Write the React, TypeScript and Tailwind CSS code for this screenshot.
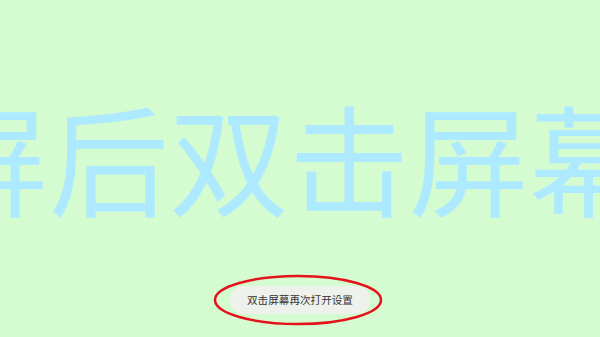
export default function App() {
  return (
    <div
      className="relative flex h-[337px] w-[600px] flex-col items-center overflow-hidden bg-[#d4fcd0]"
      style={{ fontFamily: '"Noto Sans CJK SC", "Noto Sans", sans-serif' }}
    >
      {/* scrolling big text */}
      <div className="mt-[96px] self-start whitespace-nowrap pl-0 text-[120px] leading-none text-[#adeaff] ml-[-71px]">
        屏后双击屏幕再次
      </div>

      {/* toast */}
      <div className="relative mt-auto mb-[23px]">
        <div className="rounded-full bg-[#eef1ec] px-[17px] py-[6px] text-[10.6px] leading-[16px] text-[#333]">
          双击屏幕再次打开设置
        </div>
        <svg
          className="pointer-events-none absolute left-[-18px] top-[-12px]"
          width="172"
          height="52"
          viewBox="0 0 172 52"
        >
          <ellipse cx="86" cy="26" rx="83" ry="24" fill="none" stroke="#e3121b" strokeWidth="2.5" />
        </svg>
      </div>
    </div>
  );
}
